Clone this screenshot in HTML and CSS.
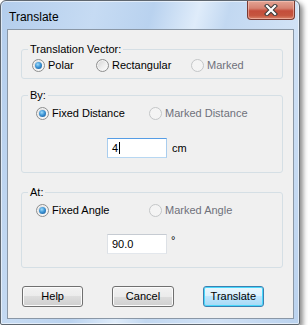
FILE: index.html
```html
<!DOCTYPE html>
<html>
<head>
<meta charset="utf-8">
<link rel="stylesheet" href="styles.css">
</head>
<body>
<div class="window">
  <div class="titlebar">
    <span class="title">Translate</span>
    <span class="close">
      <svg width="14" height="12" viewBox="0 0 14 12">
        <path d="M3 2 L11 10 M11 2 L3 10" stroke="#3a3a3a" stroke-width="4.2" stroke-linecap="square" fill="none"/>
        <path d="M3 2 L11 10 M11 2 L3 10" stroke="#ffffff" stroke-width="2.2" stroke-linecap="square" fill="none"/>
      </svg>
    </span>
  </div>
  <div class="client">
    <fieldset class="group g1">
      <legend>Translation Vector:</legend>
      <div class="inner">
        <div class="row">
          <span class="radio on w64"><span class="dot"></span>Polar</span>
          <span class="radio w95"><span class="dot"></span>Rectangular</span>
          <span class="radio off"><span class="dot"></span>Marked</span>
        </div>
      </div>
    </fieldset>
    <fieldset class="group g2">
      <legend>By:</legend>
      <div class="inner">
        <div class="row">
          <span class="radio on w113"><span class="dot"></span>Fixed Distance</span>
          <span class="radio off"><span class="dot"></span>Marked Distance</span>
        </div>
        <div class="field-row">
          <div class="textbox focused"><span>4</span><span class="caret"></span></div>
          <span class="unit">cm</span>
        </div>
      </div>
    </fieldset>
    <fieldset class="group g3">
      <legend>At:</legend>
      <div class="inner">
        <div class="row">
          <span class="radio on w113"><span class="dot"></span>Fixed Angle</span>
          <span class="radio off"><span class="dot"></span>Marked Angle</span>
        </div>
        <div class="field-row">
          <div class="textbox"><span>90.0</span></div>
          <span class="deg">°</span>
        </div>
      </div>
    </fieldset>
    <div class="buttons">
      <span class="btn">Help</span>
      <span class="btn">Cancel</span>
      <span class="btn default">Translate</span>
    </div>
  </div>
</div>
</body>
</html>
```
FILE: styles.css
```css
html, body {
  margin: 0;
  padding: 0;
  background: #ffffff;
}
body {
  font-family: "Liberation Sans", Arial, sans-serif;
  font-size: 11px;
  color: #000;
}
.window {
  box-sizing: border-box;
  width: 300px;
  height: 325px;
  border: 1px solid #5f6770;
  border-radius: 6px 6px 2px 2px;
  padding: 0 5px 5px 6px;
  background: linear-gradient(105deg, #b3cdec 0%, #c6dbf3 25%, #b9d2ef 40%, #dfecfa 52%, #c2d8f1 60%, #d1e2f6 78%, #bad2ee 100%);
  box-shadow: 3px 3px 5px rgba(0,0,0,0.45), inset 0 0 0 1px rgba(255,255,255,0.55);
}
.titlebar {
  display: flex;
  align-items: flex-start;
  height: 28px;
  margin: 0 -5px 0 -6px;
  padding: 0 4px 0 8px;
}
.title {
  font-size: 12px;
  line-height: 20px;
  margin-top: 6px;
  color: #000;
}
.close {
  margin-left: auto;
  width: 48px;
  height: 19px;
  box-sizing: border-box;
  border: 1px solid #7a3a32;
  border-top: none;
  border-radius: 0 0 4px 4px;
  background: linear-gradient(#e3a494 0%, #d68372 40%, #c44d3b 55%, #c5553f 80%, #d9836a 100%);
  box-shadow: inset 0 0 0 1px rgba(255,210,200,0.5);
  display: flex;
  align-items: center;
  justify-content: center;
}
.close svg { display: block; margin-top: -1px; }
.client {
  box-sizing: border-box;
  height: 290px;
  border: 1px solid #8a97a6;
  background: #f0f0f0;
  padding-left: 13px;
}
.group {
  box-sizing: border-box;
  width: 262px;
  margin: 0;
  padding: 0;
  min-width: 0;
  border: 1px solid #d5dfe5;
  border-radius: 3px;
}
.group legend {
  padding: 0 2px;
  margin-left: 6px;
  line-height: 14px;
  font-size: 11px;
}
.g1 { margin-top: 12px; }
.g2 { margin-top: 9px; }
.g3 { margin-top: 12px; }
.g1 .inner { padding: 3px 0 6px 10px; }
.g2 .inner { padding: 5px 0 14px 14px; }
.g3 .inner { padding: 5px 0 13px 14px; }
.row {
  display: flex;
  align-items: center;
  height: 13px;
}
.radio {
  display: flex;
  align-items: center;
  line-height: 13px;
  white-space: nowrap;
}
.w64 { width: 64px; }
.w95 { width: 95px; }
.w113 { width: 113px; }
.dot {
  position: relative;
  box-sizing: border-box;
  width: 13px;
  height: 13px;
  border-radius: 50%;
  border: 1px solid #8e8f8f;
  background: linear-gradient(135deg, #d2d2d2 0%, #eeeeee 55%, #ffffff 100%);
  box-shadow: inset 0 0 0 1px #f4f4f4;
  margin-right: 3px;
  flex: none;
}
.on .dot::after {
  content: "";
  position: absolute;
  left: 2px;
  top: 2px;
  width: 7px;
  height: 7px;
  border-radius: 50%;
  background: radial-gradient(circle at 40% 35%, #9fdcfb 0%, #3d95d6 45%, #134f8c 100%);
}
.off { color: #6f717b; }
.off .dot {
  border-color: #c4c6c8;
  background: #f4f4f4;
  box-shadow: none;
}
.field-row {
  display: flex;
  align-items: center;
  margin-left: 71px;
  height: 20px;
}
.g2 .field-row { margin-top: 18px; }
.g3 .field-row { margin-top: 17px; }
.textbox {
  box-sizing: border-box;
  width: 60px;
  height: 20px;
  background: #fff;
  border: 1px solid;
  border-color: #c6cbd2 #dde1e6 #e3e7ec #dde1e6;
  padding-left: 4px;
  display: flex;
  align-items: center;
  line-height: 13px;
}
.textbox.focused {
  border-color: #569de5 #a9cdee #b7d7f2 #a9cdee;
}
.caret {
  width: 1px;
  height: 12px;
  background: #000;
  margin-left: 1px;
}
.unit { margin-left: 5px; }
.deg {
  margin-left: 4px;
  align-self: flex-start;
  line-height: 12px;
  margin-top: 0;
}
.buttons {
  display: flex;
  margin-top: 18px;
  padding-left: 1px;
}
.btn {
  box-sizing: border-box;
  width: 66px;
  height: 21px;
  margin-right: 29px;
  border: 1px solid #707070;
  border-radius: 3px;
  background: linear-gradient(#f2f2f2 0%, #ebebeb 50%, #dddddd 50%, #cfcfcf 100%);
  box-shadow: inset 0 0 0 1px #fbfbfb;
  display: flex;
  align-items: center;
  justify-content: center;
  line-height: 13px;
}
.btn.default {
  border-color: #3c7fb1;
  background: linear-gradient(#eaf6fd 0%, #d9f0fc 50%, #bee6fd 50%, #a7d9f5 100%);
  box-shadow: inset 0 0 0 1px #48d8fb;
}
```
